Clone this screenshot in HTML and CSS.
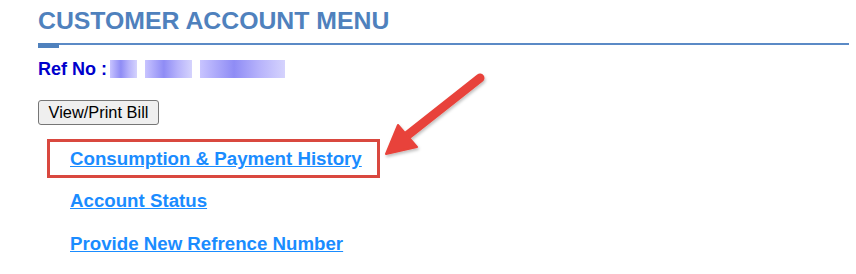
FILE: index.html
```html
<!DOCTYPE html>
<html lang="en">
<head>
<meta charset="UTF-8" />
<title>Customer Account Menu</title>
<link rel="stylesheet" href="styles.css">
</head>
<body>
<div class="page">
  <h2 class="title">CUSTOMER ACCOUNT MENU</h2>
  <div class="rule"></div>
  <div class="ref">Ref No : <span class="blur"><i class="b1"></i><i class="b2"></i><i class="b3"></i></span></div>
  <button class="bill">View/Print Bill</button>
  <ul class="menu">
    <li class="highlight"><a href="#">Consumption &amp; Payment History</a></li>
    <li><a href="#">Account Status</a></li>
    <li><a href="#">Provide New Refrence Number</a></li>
  </ul>

  <!-- annotation arrow -->
  <svg class="arrow" width="120" height="100" viewBox="380 65 120 100">
    <defs>
      <filter id="sh" x="-20%" y="-20%" width="140%" height="140%">
        <feDropShadow dx="1" dy="2" stdDeviation="1.5" flood-color="#000" flood-opacity="0.25"/>
      </filter>
    </defs>
    <g filter="url(#sh)" fill="#e8433a" stroke="#e8433a">
      <line x1="480" y1="78" x2="404" y2="138" stroke-width="9" stroke-linecap="round"/>
      <polygon points="386,154 398,125 417,147" stroke-width="2" stroke-linejoin="round"/>
    </g>
  </svg>
</div>
</body>
</html>
```

FILE: styles.css
```css
body {
  margin: 0;
  background: #fff;
  font-family: "Liberation Sans", Arial, sans-serif;
}
.page {
  position: relative;
  padding: 6px 0 0 38px;
  height: 268px;
}
.title {
  margin: 0;
  font-size: 24.8px;
  line-height: 30px;
  font-weight: bold;
  color: #4f81bd;
}
.rule {
  position: relative;
  margin: 7px 7px 0 0;
  border-top: 2px solid #5b8ac6;
}
.rule::before {
  content: "";
  position: absolute;
  left: 0;
  top: -2px;
  width: 21px;
  height: 5px;
  background: #4f81bd;
}
.ref {
  margin-top: 13px;
  font-size: 18px;
  line-height: 22px;
  font-weight: bold;
  color: #0000cc;
  display: flex;
  align-items: center;
}
.blur {
  display: inline-flex;
  height: 18px;
  margin-left: 3px;
  gap: 8px;
}
.blur i {
  display: block;
  height: 18px;
  background: linear-gradient(90deg, #c8c4ff, #8f8cf5 40%, #b7b3fb 70%, #d5d3fd);
}
.b1 { width: 27px; }
.b2 { width: 47px; }
.b3 { width: 85px; }
.bill {
  display: block;
  margin-top: 20px;
  width: 121px;
  height: 25px;
  padding: 0;
  font-family: "Liberation Sans", Arial, sans-serif;
  font-size: 16.4px;
  color: #000;
  background: #efefef;
  border: 1px solid #767676;
  border-radius: 3px;
}
.menu {
  list-style: none;
  margin: 14px 0 0 0;
  padding: 0;
}
.menu li {
  width: 333px;
  height: 39px;
  padding-left: 23px;
  box-sizing: border-box;
  margin: 0 0 4px 9px;
  font-size: 18.7px;
  line-height: 37px;
  font-weight: bold;
}
.menu li.highlight {
  border: 3px solid #d9483f;
  padding-left: 20px;
  line-height: 33px;
}
.menu a {
  color: #1a8cff;
  text-decoration: underline;
}
.arrow {
  position: absolute;
  left: 380px;
  top: 65px;
}
```
